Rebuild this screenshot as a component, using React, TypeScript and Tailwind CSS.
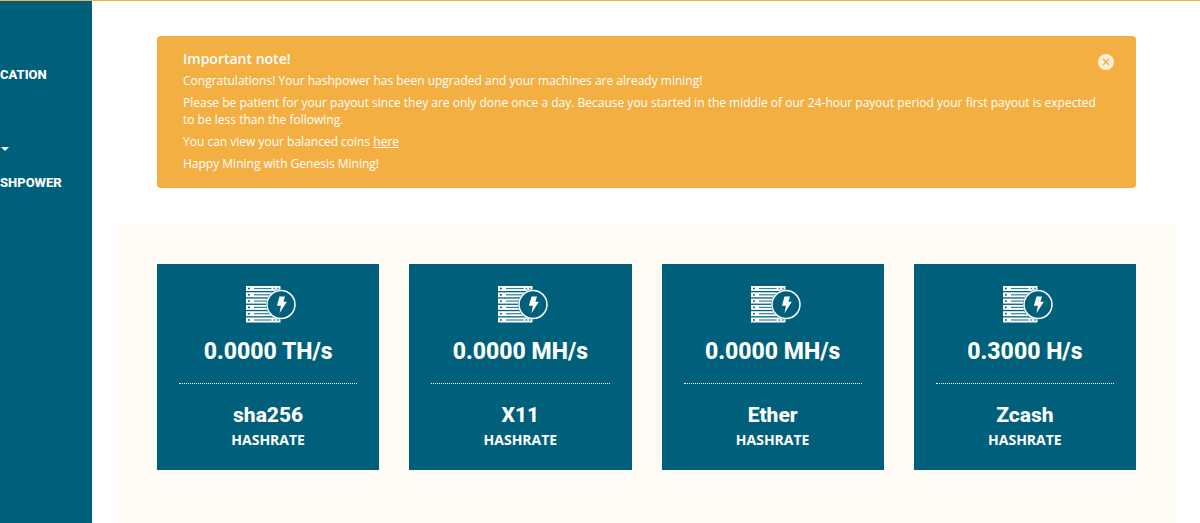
import { X } from "lucide-react";

const navItems = [
  { label: "CATION", caret: false },
  { label: "", caret: false },
  { label: "", caret: true },
  { label: "SHPOWER", caret: false },
];

const hashrates = [
  { value: "0.0000 TH/s", name: "sha256" },
  { value: "0.0000 MH/s", name: "X11" },
  { value: "0.0000 MH/s", name: "Ether" },
  { value: "0.3000 H/s", name: "Zcash" },
];

const rackRows = [0, 6.3, 12.6, 18.9, 25.2, 31.5];

function MinerIcon() {
  return (
    <svg className="block h-[38px] w-[58px]" viewBox="0 0 58 38" aria-hidden="true">
      {rackRows.map((y) => (
        <g key={y} transform={`translate(7 ${y + 1})`}>
          <rect width="34.5" height="5" fill="#fff" />
          <rect x="2" y="1.7" width="1.8" height="1.6" fill="#00607b" />
          <rect x="8" y="1.900" width="17.500" height="1.2" fill="#00607b" opacity="0.8" />
          <rect x="27.500" y="1.7" width="1.8" height="1.6" fill="#00607b" opacity="0.7" />
          <rect x="31" y="1.7" width="1.8" height="1.6" fill="#00607b" opacity="0.7" />
        </g>
      ))}
      <circle cx="42" cy="19.500" r="15" fill="#00607b" />
      <circle cx="42" cy="19.500" r="14" fill="#00607b" stroke="#fff" strokeWidth="1.5" />
      <path d="M40.500 11.500h5.500l-1.600 5.300h3.400l-7.300 11.500 1.400-7.500h-4z" fill="#fff" />
    </svg>
  );
}

function Sidebar() {
  return (
    <nav aria-label="Main" className="w-[92px] shrink-0 overflow-hidden bg-[#00607b] pt-14">
      {navItems.map((item, i) => (
        <a
          key={i}
          href="#"
          aria-label={item.label || "Menu"}
          className="flex h-9 items-center font-['Roboto',sans-serif] text-[13px] font-extrabold text-white"
        >
          {item.label}
          {item.caret && (
            <svg className="mt-1 ml-px h-1 w-2" viewBox="0 0 8 4" aria-hidden="true">
              <path d="M0 0h8L4 4z" fill="#fff" />
            </svg>
          )}
        </a>
      ))}
    </nav>
  );
}

function Notice() {
  return (
    <section className="mx-10 flex items-start justify-between rounded bg-[#f4af43] px-[26px] pt-[15px] pb-4 text-xs leading-[17px] text-white">
      <div className="flex max-w-[920px] flex-col gap-[5px]">
        <h2 className="text-sm leading-4 font-semibold">Important note!</h2>
        <p>Congratulations! Your hashpower has been upgraded and your machines are already mining!</p>
        <p>
          Please be patient for your payout since they are only done once a day. Because you started in the middle of
          our 24-hour payout period your first payout is expected to be less than the following.
        </p>
        <p>
          You can view your balanced coins{" "}
          <a href="#" className="underline">
            here
          </a>
        </p>
        <p>Happy Mining with Genesis Mining!</p>
      </div>
      <button
        type="button"
        aria-label="Close"
        className="-mr-1 mt-[3px] flex size-4 shrink-0 items-center justify-center rounded-full bg-[#fdefda] text-[#f4af43]"
      >
        <X size={10} strokeWidth={4} />
      </button>
    </section>
  );
}

export default function App() {
  return (
    <div className="flex min-h-screen flex-col border-t border-[#f4af43] bg-white font-['Open_Sans',sans-serif]">
      <div className="flex flex-1">
        <Sidebar />
        <main className="mr-6 ml-[25px] flex min-w-0 flex-1 flex-col gap-9 pt-[35px]">
          <Notice />
          <div className="grid flex-1 grid-cols-4 content-start gap-[30px] bg-[#fffcf5] p-10">
            {hashrates.map((rate) => (
              <article key={rate.name} className="flex flex-col items-center bg-[#00607b] px-[22px] pt-[21px] pb-[21px] text-center text-white">
                <MinerIcon />
                <p className="mt-[13px] font-['Roboto',sans-serif] text-[23px] leading-8 font-extrabold">{rate.value}</p>
                <hr className="mt-[15px] w-full border-t border-dotted border-white" />
                <h3 className="mt-[15px] font-['Roboto',sans-serif] text-[21px] leading-8 font-extrabold">{rate.name}</h3>
                <p className="text-sm leading-[18px] font-bold">HASHRATE</p>
              </article>
            ))}
          </div>
        </main>
      </div>
    </div>
  );
}
